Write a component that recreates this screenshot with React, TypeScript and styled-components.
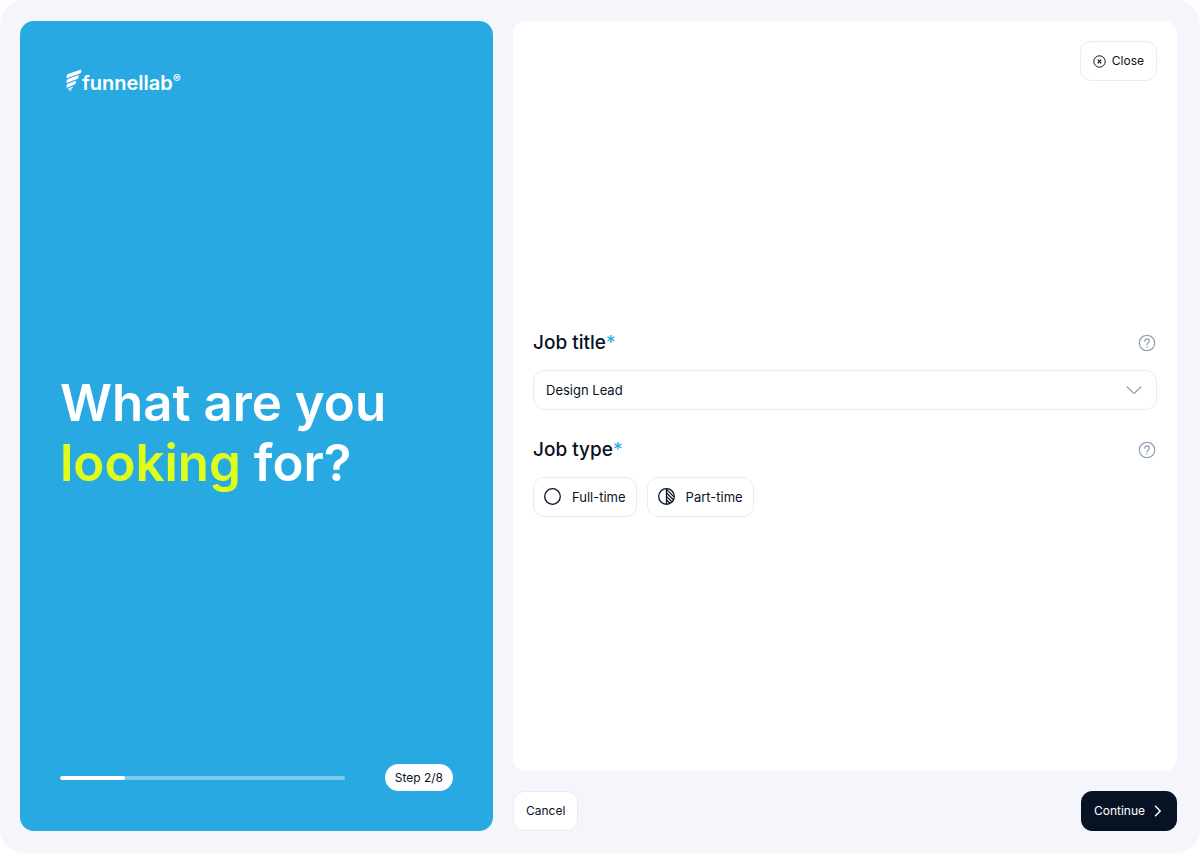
import React, { useState } from "react";
import styled, { createGlobalStyle } from "styled-components";

const color = {
  ink: "#071224",
  blue: "#28a9e2",
  lime: "#dfff1b",
  canvas: "#f4f6fb",
  line: "#e9eaf3",
  muted: "#94a3b5",
};

const GlobalStyle = createGlobalStyle`
  *, *::before, *::after { box-sizing: border-box; }
  body {
    margin: 0;
    background: #fff;
    color: ${color.ink};
    font-family: Inter, "Liberation Sans", sans-serif;
  }
  button, select, input { font: inherit; color: inherit; }
`;

const Shell = styled.div`
  min-height: 100vh;
  display: grid;
  grid-template-columns: 473fr 664fr;
  gap: 20px;
  padding: 21px 23px 22px 20px;
  background: ${color.canvas};
  border-radius: 24px;
`;

const Intro = styled.aside`
  display: flex;
  flex-direction: column;
  justify-content: space-between;
  padding: 40px;
  border-radius: 14px;
  background: ${color.blue};
  color: #fff;
`;

const Logo = styled.div`
  display: flex;
  align-items: center;
  height: 40px;
  padding-left: 6px;
  font-size: 20px;
  font-weight: 600;
  line-height: 24px;
`;

const LogoText = styled.span`
  padding-top: 3px;
`;

const Registered = styled.span`
  align-self: flex-start;
  padding-top: 10px;
  font-size: 12px;
  line-height: 16px;
`;

const Headline = styled.h1`
  margin: 0;
  font-size: 51px;
  font-weight: 600;
  line-height: 60px;
`;

const Accent = styled.span`
  color: ${color.lime};
`;

const ProgressRow = styled.div`
  display: flex;
  align-items: center;
  gap: 40px;
`;

const Track = styled.div`
  flex: 1;
  height: 4px;
  border-radius: 2px;
  background: #7ecbee;
  overflow: hidden;
`;

const Fill = styled.div`
  height: 100%;
  border-radius: 2px;
  background: #fff;
`;

const StepChip = styled.span`
  padding: 5px 10px;
  border-radius: 14px;
  background: #fff;
  color: ${color.ink};
  font-size: 12px;
  line-height: 17px;
`;

const Main = styled.main`
  display: flex;
  flex-direction: column;
  gap: 20px;
  min-width: 0;
`;

const Card = styled.section`
  flex: 1;
  display: flex;
  flex-direction: column;
  padding: 20px;
  border-radius: 12px;
  background: #fff;
`;

const Button = styled.button<{ $primary?: boolean }>`
  display: inline-flex;
  align-items: center;
  gap: 6px;
  height: 40px;
  padding: 0 12px;
  border: 1px solid ${(p) => (p.$primary ? color.ink : color.line)};
  border-radius: 11px;
  background: ${(p) => (p.$primary ? color.ink : "#fff")};
  color: ${(p) => (p.$primary ? "#fff" : color.ink)};
  font-size: 12px;
  line-height: 16px;
  cursor: pointer;
`;

const CloseButton = styled(Button)`
  align-self: flex-end;
`;

const Form = styled.form`
  flex: 1;
  display: flex;
  flex-direction: column;
  justify-content: center;
  gap: 28px;
  padding-top: 15px;
`;

const Field = styled.div`
  display: flex;
  flex-direction: column;
  gap: 15px;
`;

const FieldHead = styled.div`
  display: flex;
  align-items: center;
  justify-content: space-between;
  height: 24px;
`;

const FieldLabel = styled.label`
  font-size: 19px;
  font-weight: 500;
  line-height: 24px;
`;

const Required = styled.span`
  color: ${color.blue};
  font-weight: 400;
`;

const HelpButton = styled.button`
  display: flex;
  padding: 0;
  border: 0;
  background: none;
  color: ${color.muted};
  cursor: pointer;
`;

const SelectBox = styled.div`
  position: relative;
`;

const Select = styled.select`
  display: block;
  width: 100%;
  height: 40px;
  padding: 0 40px 0 12px;
  border: 1px solid ${color.line};
  border-radius: 11px;
  background: #fff;
  font-size: 13px;
  appearance: none;
`;

const SelectArrow = styled.svg`
  position: absolute;
  top: 12px;
  right: 15px;
  pointer-events: none;
`;

const Options = styled.div`
  display: flex;
  flex-wrap: wrap;
  gap: 10px;
`;

const Option = styled.label`
  position: relative;
  display: flex;
  align-items: center;
  gap: 10px;
  height: 40px;
  padding: 0 10px 0 9px;
  border: 1px solid ${color.line};
  border-radius: 11px;
  font-size: 13px;
  line-height: 20px;
  cursor: pointer;

  &:focus-within { border-color: ${color.blue}; }
`;

const HiddenRadio = styled.input`
  position: absolute;
  inset: 0;
  margin: 0;
  opacity: 0;
  cursor: pointer;
`;

const Footer = styled.footer`
  display: flex;
  justify-content: space-between;
`;

const LogoMark = () => (
  <svg width="16" height="24" viewBox="0 0 16 24" fill="#fff" aria-hidden="true">
    <path d="M.6 7.600C.6 6 1.300 5.200 2.600 4.700L15.200 .6V2.200C15.200 3.500 14.500 4.300 13.300 4.800L.6 9.300Z" />
    <path d="M.6 12.400C.6 11 1.300 10.200 2.500 9.700L12.600 6.100V7.700C12.600 9 11.900 9.800 10.700 10.300L.6 14Z" />
    <path d="M.6 17.100C.6 15.800 1.200 15 2.400 14.500L9.900 11.700V13.200C9.900 14.500 9.200 15.300 8.100 15.800L.6 18.700Z" />
    <path d="M1.400 19.700L7 17.300C7 18.700 6.500 19.400 5.500 19.900L5 22.500Z" opacity=".7" />
  </svg>
);

const CloseIcon = () => (
  <svg width="13" height="13" viewBox="0 0 13 13" fill="none" stroke="currentColor" aria-hidden="true">
    <circle cx="6.500" cy="6.500" r="5.700" />
    <path d="M4.700 4.700L8.300 8.300M8.300 4.700L4.700 8.300" strokeWidth="1.200" />
  </svg>
);

const HelpIcon = () => (
  <svg width="20" height="20" viewBox="0 0 20 20" fill="none" stroke="currentColor" strokeWidth="1.300" aria-hidden="true">
    <circle cx="10" cy="10" r="7.700" />
    <path d="M7.700 8.300C7.700 6.900 8.600 6 10 6S12.400 6.900 12.400 8.100C12.400 9.800 10 9.800 10 11.800" strokeLinecap="round" />
    <circle cx="10" cy="14" r=".8" fill="currentColor" stroke="none" />
  </svg>
);

const EmptyCircle = () => (
  <svg width="19" height="19" viewBox="0 0 19 19" fill="none" stroke="currentColor" strokeWidth="1.300" aria-hidden="true">
    <circle cx="9.500" cy="9.500" r="7.800" />
  </svg>
);

const HalfCircle = () => (
  <svg width="19" height="19" viewBox="0 0 19 19" fill="none" stroke="currentColor" strokeWidth="1.300" aria-hidden="true">
    <circle cx="9.500" cy="9.500" r="7.800" />
    <path d="M9.500 1.700V17.300M9.500 2.400L16.700 9.600M9.500 5.900L15.900 12.300M9.500 9.400L14.600 14.500M9.500 12.900L12.900 16.300" />
  </svg>
);

const jobTypes = [
  { value: "full", label: "Full-time", Icon: EmptyCircle },
  { value: "part", label: "Part-time", Icon: HalfCircle },
];

export default function App() {
  const [title, setTitle] = useState("Design Lead");
  const step = 2;
  const progress = 23;

  return (
    <>
      <GlobalStyle />
      <Shell>
        <Intro>
          <Logo>
            <LogoMark />
            <LogoText>funnellab</LogoText>
            <Registered>®</Registered>
          </Logo>
          <Headline>
            What are you
            <br />
            <Accent>looking</Accent> for?
          </Headline>
          <ProgressRow>
            <Track role="progressbar" aria-label="Progress" aria-valuemin={0} aria-valuemax={8} aria-valuenow={step}>
              <Fill style={{ width: `${progress}%` }} />
            </Track>
            <StepChip>Step {step}/8</StepChip>
          </ProgressRow>
        </Intro>

        <Main>
          <Card>
            <CloseButton type="button">
              <CloseIcon />
              Close
            </CloseButton>
            <Form id="job-form" onSubmit={(e) => e.preventDefault()}>
              <Field>
                <FieldHead>
                  <FieldLabel htmlFor="job-title">
                    Job title<Required>*</Required>
                  </FieldLabel>
                  <HelpButton type="button" aria-label="Help with job title">
                    <HelpIcon />
                  </HelpButton>
                </FieldHead>
                <SelectBox>
                  <Select id="job-title" value={title} onChange={(e) => setTitle(e.target.value)}>
                    <option>Design Lead</option>
                  </Select>
                  <SelectArrow width="16" height="16" viewBox="0 0 16 16" fill="none" stroke={color.muted} strokeWidth="1.300" strokeLinecap="round" strokeLinejoin="round">
                    <path d="M1.200 5L7.300 11Q8 11.600 8.700 11L14.800 5" />
                  </SelectArrow>
                </SelectBox>
              </Field>
              <Field role="radiogroup" aria-labelledby="job-type">
                <FieldHead>
                  <FieldLabel as="span" id="job-type">
                    Job type<Required>*</Required>
                  </FieldLabel>
                  <HelpButton type="button" aria-label="Help with job type">
                    <HelpIcon />
                  </HelpButton>
                </FieldHead>
                <Options>
                  {jobTypes.map(({ value, label, Icon }) => (
                    <Option key={value}>
                      <HiddenRadio type="radio" name="job-type" value={value} />
                      <Icon />
                      {label}
                    </Option>
                  ))}
                </Options>
              </Field>
            </Form>
          </Card>
          <Footer>
            <Button type="button">Cancel</Button>
            <Button type="submit" form="job-form" $primary>
              Continue
              <svg width="13" height="14" viewBox="0 0 13 14" fill="none" stroke="currentColor" strokeWidth="1.500" strokeLinecap="round" strokeLinejoin="round" aria-hidden="true">
                <path d="M4.500 2.300L9.200 7L4.500 11.700" />
              </svg>
            </Button>
          </Footer>
        </Main>
      </Shell>
    </>
  );
}
